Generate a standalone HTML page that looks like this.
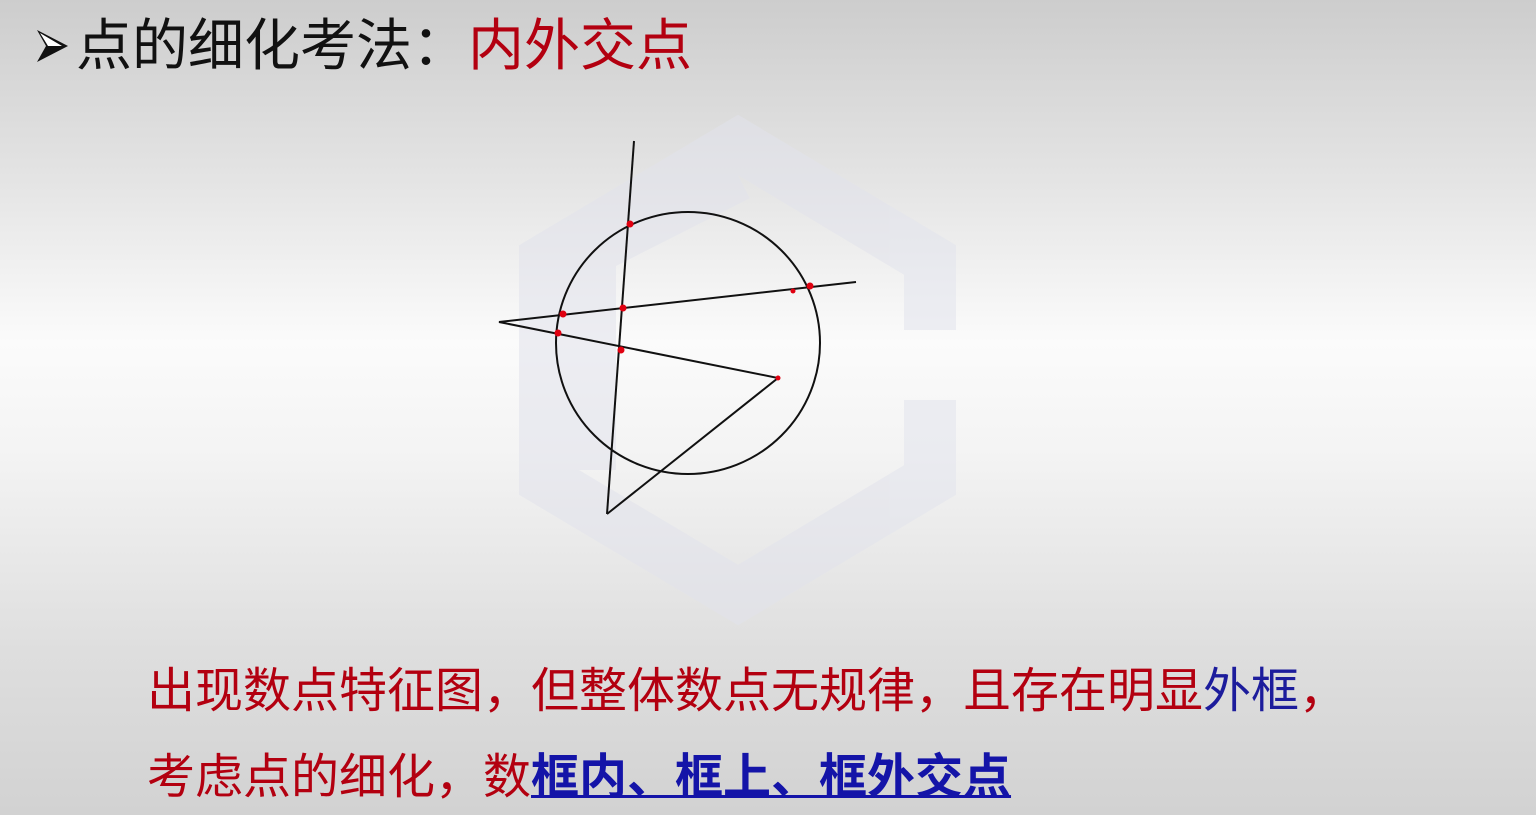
<!DOCTYPE html>
<html><head><meta charset="utf-8"><style>
html,body{margin:0;padding:0}
body{width:1536px;height:815px;overflow:hidden;position:relative;
background:linear-gradient(180deg,#cdcdcd 0%,#e4e4e4 22%,#fbfbfb 42%,#f4f4f4 55%,#dedede 80%,#d2d2d2 100%);
font-family:"Liberation Sans","Noto Sans CJK SC",sans-serif}
.t{position:absolute;white-space:nowrap}
</style></head><body>
<svg width="1536" height="815" style="position:absolute;left:0;top:0">
<g fill="none" stroke="#e2e3ec" stroke-width="52" opacity="0.55">
<path d="M930 330 L930 260 L738 145 L545 260 L545 480 L738 595 L930 480 L930 400"/>
<path d="M590 470 L590 250 L738 175"/>
</g>
<path d="M37 30 L68 46 L37 62 L46 46 Z" fill="#111"/>
<path d="M40 33 L62 46 L48 46 Z" fill="#fff"/>
<ellipse cx="688" cy="343" rx="132" ry="131" fill="none" stroke="#111" stroke-width="2"/>
<g stroke="#111" stroke-width="2" fill="none">
<line x1="634" y1="141" x2="607" y2="514"/>
<polyline points="856,282 499,322 778,378 607,514"/>
</g>
<g fill="#e00010">
<circle cx="630" cy="224" r="3.5"/><circle cx="563" cy="314" r="3.5"/>
<circle cx="623" cy="308" r="3.5"/><circle cx="558" cy="333" r="3.5"/>
<circle cx="621" cy="350" r="3.5"/><circle cx="778" cy="378" r="2.5"/>
<circle cx="810" cy="286" r="3.5"/><circle cx="793" cy="291" r="2.5"/>
</g>
</svg>
<div class="t" style="left:76px;top:14px;font-size:56px;line-height:64px;color:#111">点的细化考法：<span style="color:#b30010">内外交点</span></div>
<div class="t" style="left:147px;top:662px;font-size:48px;line-height:60px;color:#b30010">出现数点特征图，但整体数点无规律，且存在明显<span style="color:#1c1c9c">外框</span>，</div>
<div class="t" style="left:147px;top:748px;font-size:48px;line-height:60px;color:#b30010">考虑点的细化，数<span style="color:#1414a8;font-weight:bold;text-decoration:underline;text-decoration-thickness:3px">框内、框上、框外交点</span></div>
</body></html>
